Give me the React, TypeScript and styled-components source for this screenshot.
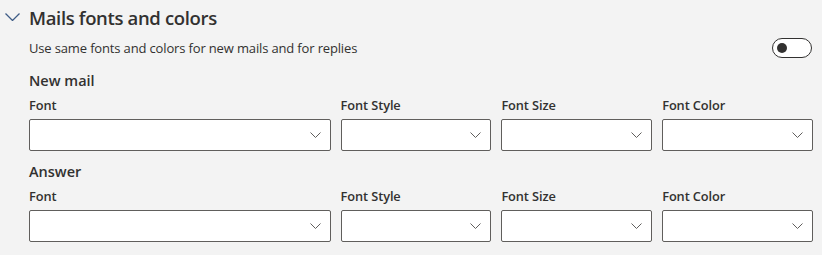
import React from "react";
import styled, { createGlobalStyle } from "styled-components";

const Global = createGlobalStyle`
  html, body { margin: 0; padding: 0; background: #f3f3f3; }
  body { font-family: "Open Sans", "Noto Sans", sans-serif; color: #323130; }
`;

const Page = styled.div`
  width: 822px;
  height: 255px;
  box-sizing: border-box;
  padding: 2px 9px 0 5px;
  background: #f3f3f3;
  overflow: hidden;
`;

const Header = styled.div`
  display: flex;
  align-items: center;
  gap: 9px;
  height: 30px;
`;

const Title = styled.h2`
  margin: 0;
  font-size: 18.5px;
  font-weight: 600;
  color: #323130;
  letter-spacing: -0.35px;
`;

const Body = styled.div`
  padding-left: 24px;
`;

const ToggleRow = styled.div`
  display: flex;
  align-items: center;
  justify-content: space-between;
  height: 30px;
  margin-top: 1px;
`;

const Desc = styled.span`
  font-size: 13px;
  color: #323130;
  letter-spacing: -0.15px;
`;

const Toggle = styled.div`
  width: 38px;
  height: 18px;
  border: 1px solid #323130;
  border-radius: 10px;
  background: #fff;
  position: relative;
  box-sizing: content-box;
  margin-right: 1px;
`;

const Knob = styled.div`
  position: absolute;
  left: 4px;
  top: 4px;
  width: 10px;
  height: 10px;
  border-radius: 50%;
  background: #323130;
`;

const SectionTitle = styled.div<{ $mt: number }>`
  font-size: 14.5px;
  font-weight: 600;
  color: #323130;
  height: 24px;
  line-height: 24px;
  margin-top: ${(p) => p.$mt}px;
`;

const Grid = styled.div`
  display: grid;
  grid-template-columns: 2fr 1fr 1fr 1fr;
  column-gap: 10px;
`;

const Field = styled.div`
  display: flex;
  flex-direction: column;
`;

const Label = styled.label`
  font-size: 12.8px;
  font-weight: 600;
  color: #323130;
  height: 24px;
  line-height: 24px;
  margin-bottom: 2px;
  letter-spacing: -0.1px;
`;

const Select = styled.div`
  height: 30px;
  border: 1px solid #605e5c;
  border-radius: 2px;
  background: #fff;
  display: flex;
  align-items: center;
  justify-content: flex-end;
  padding-right: 9px;
`;

const Chevron = ({ w, h, color, sw }: { w: number; h: number; color: string; sw: number }) => (
  <svg width={w} height={h} viewBox={`0 0 ${w} ${h}`} fill="none">
    <polyline points={`0.5,0.5 ${w / 2},${h - 0.5} ${w - 0.5},0.5`} stroke={color} strokeWidth={sw} />
  </svg>
);

const labels = ["Font", "Font Style", "Font Size", "Font Color"];

const FieldRow = () => (
  <Grid>
    {labels.map((l) => (
      <Field key={l}>
        <Label>{l}</Label>
        <Select>
          <Chevron w={11} h={6} color="#605e5c" sw={1} />
        </Select>
      </Field>
    ))}
  </Grid>
);

export default function App() {
  return (
    <>
      <Global />
      <Page>
        <Header>
          <Chevron w={15} h={8} color="#3e5c86" sw={1.3} />
          <Title>Mails fonts and colors</Title>
        </Header>
        <Body>
          <ToggleRow>
            <Desc>Use same fonts and colors for new mails and for replies</Desc>
            <Toggle>
              <Knob />
            </Toggle>
          </ToggleRow>
          <SectionTitle $mt={6}>New mail</SectionTitle>
          <FieldRow />
          <SectionTitle $mt={9}>Answer</SectionTitle>
          <FieldRow />
        </Body>
      </Page>
    </>
  );
}
